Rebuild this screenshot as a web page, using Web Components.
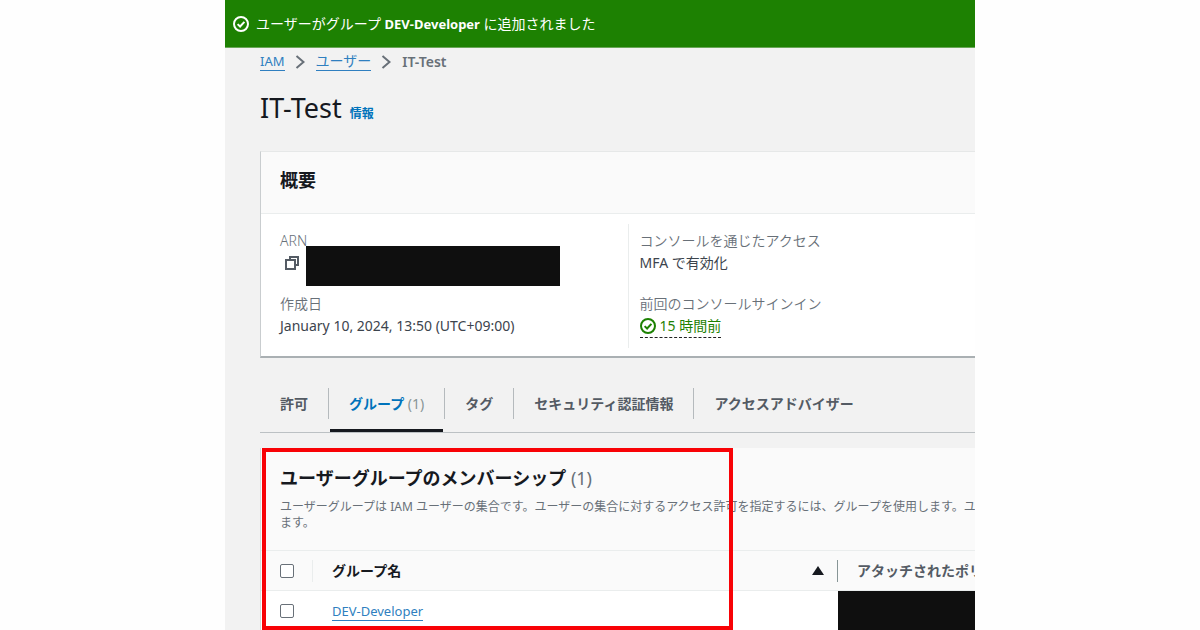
<!DOCTYPE html>
<html lang="ja">
<head>
<meta charset="utf-8">
<meta name="viewport" content="width=device-width, initial-scale=1">
<title>IT-Test | IAM</title>
<style>
  body {
    margin: 0;
    background: #fefefe;
    color: #16191f;
    font: 14px/22px "Noto Sans", "Noto Sans CJK JP", sans-serif;
  }
</style>
</head>
<body>
<iam-console>
  <flash-message slot="flash">ユーザーがグループ <b>DEV-Developer</b> に追加されました</flash-message>
  <bread-crumbs></bread-crumbs>
  <page-title>IT-Test</page-title>
  <summary-card></summary-card>
  <tab-bar></tab-bar>
  <group-membership></group-membership>
</iam-console>

<script>
  const define = (name, html) => {
    const template = document.createElement('template');
    template.innerHTML = html;
    customElements.define(name, class extends HTMLElement {
      constructor() {
        super();
        this.attachShadow({ mode: 'open' }).append(template.content.cloneNode(true));
      }
    });
  };

  define('status-icon', `
    <style>
      :host { display: inline-block; width: 16px; height: 16px; flex: none; }
      svg { display: block; fill: none; stroke: currentColor; stroke-width: 2; }
    </style>
    <svg viewBox="0 0 16 16" aria-hidden="true"><circle cx="8" cy="8" r="7"/><path d="M4.6 8.1l2.5 2.4 4.3-4.6"/></svg>`);

  define('iam-console', `
    <style>
      :host { display: block; box-sizing: border-box; width: 62.5%; height: 100vh; margin: 0 auto; background: #f2f2f2; overflow: hidden; }
      main { padding-left: 35px; }
    </style>
    <slot name="flash"></slot>
    <main><slot></slot></main>`);

  define('flash-message', `
    <style>
      :host { display: flex; align-items: center; gap: 7px; box-sizing: border-box; min-height: 48px; padding: 0 8px; background: #1d8102; border-bottom: 1px solid #6aa758; color: #fff; white-space: nowrap; }
      ::slotted(b) { font-size: 13px; }
    </style>
    <status-icon></status-icon><span><slot></slot></span>`);

  define('bread-crumbs', `
    <style>
      :host { display: block; padding-top: 4px; }
      ol { display: flex; align-items: center; list-style: none; margin: 0; padding: 0; font-size: 13px; line-height: 18px; color: #687078; }
      li { display: flex; align-items: center; }
      .jp, b { font-size: 14px; }
      a { color: #2f7fc0; text-decoration: none; border-bottom: 1px solid #2f7fc0; }
      svg { width: 10px; height: 16px; margin: 0 11px 0 10px; fill: none; stroke: #687078; stroke-width: 2; }
      b { font-weight: 600; }
    </style>
    <nav aria-label="breadcrumb"><ol>
      <li><a href="#iam">IAM</a><svg viewBox="0 0 10 16" aria-hidden="true"><path d="M1.5 2l7 6-7 6"/></svg></li>
      <li><a class="jp" href="#users">ユーザー</a><svg viewBox="0 0 10 16" aria-hidden="true"><path d="M1.5 2l7 6-7 6"/></svg></li>
      <li><b>IT-Test</b></li>
    </ol></nav>`);

  define('page-title', `
    <style>
      :host { display: flex; align-items: baseline; gap: 8px; padding: 19px 0 25px; }
      h1 { margin: 0; font-size: 27px; line-height: 36px; font-weight: 400; }
      a { color: #0073bb; font-size: 12px; line-height: 18px; font-weight: 700; text-decoration: none; }
    </style>
    <h1><slot></slot></h1><a href="#info">情報</a>`);

  define('summary-card', `
    <style>
      :host { display: block; background: #fff; border: 1px solid #e6e8e8; border-right: 0; border-bottom: 2px solid #aab0b3; border-left-color: #c9cdcf; }
      header { padding: 16px 19px 21px; background: #fafafa; border-bottom: 1px solid #eaeded; }
      h2 { margin: 0; font-size: 18px; line-height: 24px; font-weight: 700; }
      .columns { display: grid; grid-template-columns: 1fr 1fr; padding: 10px 0 8px 19px; }
      dl { margin: 0; padding: 6px 0 8px; }
      dl + dl { border-left: 1px solid #eaeded; padding-left: 11px; }
      dt { color: #687078; font-weight: 350; white-space: nowrap; }
      dd { position: relative; margin: 0; color: #3c444d; min-height: 22px; white-space: nowrap; }
      dd + dt { margin-top: 19px; }
      button { display: block; padding: 3px; margin-left: 1px; border: 0; background: none; color: #545b64; }
      button svg { display: block; width: 16px; height: 16px; fill: none; stroke: currentColor; stroke-width: 2; }
      .redacted { position: absolute; left: 26px; top: -6px; width: 78%; max-width: 254px; height: 40px; background: #0f0f0f; }
      .status { display: inline-flex; align-items: center; gap: 4px; color: #1d8102; border-bottom: 1px dashed #222; }
    </style>
    <header><h2>概要</h2></header>
    <div class="columns">
      <dl>
        <dt>ARN</dt>
        <dd><button type="button" aria-label="ARN"><svg viewBox="0 0 16 16" aria-hidden="true"><path d="M2 5h9v9H2zM6 5V2h8v8h-3"/></svg></button><span class="redacted"></span></dd>
        <dt>作成日</dt>
        <dd>January 10, 2024, 13:50 (UTC+09:00)</dd>
      </dl>
      <dl>
        <dt>コンソールを通じたアクセス</dt>
        <dd>MFA で有効化</dd>
        <dt>前回のコンソールサインイン</dt>
        <dd><span class="status"><status-icon></status-icon><span>15 時間前</span></span></dd>
      </dl>
    </div>`);

  define('tab-bar', `
    <style>
      :host { display: block; margin-top: 29px; border-bottom: 1px solid #bcc1c4; }
      nav { display: flex; gap: 1px; }
      a { position: relative; padding: 6px 20px 17px; color: #545b64; font-weight: 700; text-decoration: none; white-space: nowrap; }
      a + a::before { content: ""; position: absolute; left: -1px; top: 1px; height: 31px; border-left: 1px solid #b5babd; }
      a[aria-current] { color: #0073bb; }
      a[aria-current]::after { content: ""; position: absolute; left: 1px; right: 1px; bottom: 0; height: 3px; background: #16191f; }
      span { color: #879596; font-weight: 400; }
    </style>
    <nav>
      <a href="#permissions">許可</a><a href="#groups" aria-current="page">グループ <span>(1)</span></a><a href="#tags">タグ</a><a href="#security">セキュリティ認証情報</a><a href="#advisor">アクセスアドバイザー</a>
    </nav>`);

  define('group-membership', `
    <style>
      :host { display: block; position: relative; margin-top: 15px; background: #fff; border-left: 1px solid #d5dbdb; }
      header { padding: 18px 0 19px 19px; background: #fafafa; border-bottom: 1px solid #eaeded; overflow: hidden; }
      h2 { margin: 0 0 9px; font-size: 18px; line-height: 24px; font-weight: 700; }
      h2 span { color: #687078; font-weight: 400; }
      p { margin: 0; font-size: 12px; line-height: 16px; color: #687078; white-space: nowrap; }
      table { width: 100%; table-layout: fixed; border-collapse: collapse; }
      th, td { height: 39px; padding: 0 0 0 19px; text-align: left; vertical-align: middle; white-space: nowrap; overflow: hidden; }
      th { background: #fafafa; }
      thead tr { border-bottom: 1px solid #eaeded; }
      .pick { width: 33px; }
      .policy { width: 118px; color: #545b64; }
      th > div { display: flex; align-items: center; height: 22px; }
      th.pick > div { border-right: 1px solid #eaeded; }
      th.name > div { justify-content: space-between; padding-right: 13px; border-right: 1px solid #879596; }
      .sort { border: 6px solid transparent; border-top: 0; border-bottom: 9px solid #16191f; }
      input { appearance: none; display: block; box-sizing: border-box; width: 14px; height: 14px; margin: 0; border: 1px solid #687078; border-radius: 2px; background: #fff; }
      td a { font-size: 13px; color: #2f7fc0; text-decoration: none; border-bottom: 1px solid #2f7fc0; }
      td.hidden { background: #0f0f0f; background-clip: padding-box; }
      .frame { position: absolute; inset: 0 auto 0 1px; width: 66%; box-sizing: border-box; border: 4px solid #f80206; pointer-events: none; }
    </style>
    <header>
      <h2>ユーザーグループのメンバーシップ <span>(1)</span></h2>
      <p>ユーザーグループは IAM ユーザーの集合です。ユーザーの集合に対するアクセス許可を指定するには、グループを使用します。ユー<br>ます。</p>
    </header>
    <table>
      <thead><tr>
        <th class="pick"><div><input type="checkbox" aria-label="すべて選択"></div></th>
        <th class="name"><div>グループ名<i class="sort"></i></div></th>
        <th class="policy">アタッチされたポリ</th>
      </tr></thead>
      <tbody><tr>
        <td><input type="checkbox" aria-label="DEV-Developer"></td>
        <td><a href="#dev-developer">DEV-Developer</a></td>
        <td class="hidden"></td>
      </tr></tbody>
    </table>
    <div class="frame"></div>`);
</script>
</body>
</html>
